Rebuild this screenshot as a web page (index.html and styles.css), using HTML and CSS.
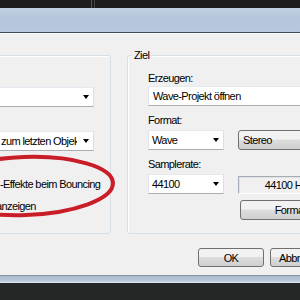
FILE: index.html
```html
<!DOCTYPE html>
<html lang="de">
<head>
  <meta charset="UTF-8">
  <title>Bouncing</title>
  <link rel="stylesheet" href="styles.css">
</head>
<body>
  <div class="screen">
    <div class="taskbar"><span class="taskbar-sep"></span></div>

    <div class="window">
      <div class="titlebar"></div>

      <div class="client">
        <div class="groups">
          <div class="group group-source">
            <div class="combo"><span class="combo-text"></span></div>
            <div class="combo combo-second"><span class="combo-text shift">zum letzten Objekt</span></div>
            <div class="check-line">-Effekte beim Bouncing</div>
            <div class="check-line check-line-last">anzeigen</div>
          </div>

          <div class="group group-target">
            <span class="group-title">Ziel</span>
            <div class="label">Erzeugen:</div>
            <div class="combo combo-wide"><span class="combo-text">Wave-Projekt öffnen</span></div>

            <div class="label label-gap">Format:</div>
            <div class="field-row">
              <div class="combo combo-small"><span class="combo-text">Wave</span></div>
              <div class="combo-button">Stereo</div>
            </div>

            <div class="label label-gap">Samplerate:</div>
            <div class="field-row">
              <div class="combo combo-small"><span class="combo-text">44100</span></div>
              <div class="readonly">44100 Hz</div>
            </div>
            <button class="btn btn-format">Format...</button>
          </div>
        </div>

        <div class="actions">
          <button class="btn">OK</button>
          <button class="btn">Abbrechen</button>
        </div>
      </div>

      <div class="frame-bottom"></div>
    </div>

    <svg class="mark" width="300" height="300" viewBox="0 0 300 300">
      <ellipse cx="25" cy="186" rx="88" ry="29" fill="none" stroke="#c91d27" stroke-width="4" transform="rotate(-2 25 186)"/>
    </svg>
  </div>
</body>
</html>
```

FILE: styles.css
```css
body {
  margin: 0;
  background-color: #232826;
  font-family: "Liberation Sans", Arial, sans-serif;
  font-size: 11px;
  letter-spacing: -0.6px;
  color: #000;
}

.screen {
  position: relative;
  width: 300px;
  height: 300px;
  overflow: hidden;
}

.taskbar {
  height: 8px;
  background-color: #1d1d1d;
}

.taskbar-sep {
  display: block;
  margin-left: 91px;
  width: 2px;
  height: 8px;
  border-left: 1px solid #555;
  border-right: 1px solid #444;
}

.titlebar {
  height: 24px;
  background: linear-gradient(#c2d0e3, #b5c5dc 40%, #b9c8de);
  border-bottom: 1px solid #3e4b5c;
}

.client {
  box-sizing: border-box;
  height: 242px;
  padding-top: 21px;
  background-color: #f0f0f0;
  border-top: 1px solid #fbfbfb;
}

.groups {
  display: flex;
  gap: 16px;
}

.group {
  position: relative;
  box-sizing: border-box;
  height: 179px;
  border: 1px solid #d5dfe5;
  box-shadow: inset 1px 1px 0 #fff;
  border-radius: 3px;
}

.group-source {
  margin-left: -40px;
  width: 151px;
  padding: 31px 16px 0 10px;
  flex-shrink: 0;
}

.group-target {
  width: 220px;
  flex-shrink: 0;
  padding: 15px 0 0 20px;
}

.group-title {
  position: absolute;
  top: -8px;
  left: 4px;
  padding: 0 2px;
  background-color: #f0f0f0;
  line-height: 14px;
}

.label {
  line-height: 14px;
}

.label-gap {
  margin-top: 7px;
}

.combo {
  position: relative;
  box-sizing: border-box;
  height: 20px;
  background-color: #fff;
  border: 1px solid #abadb3;
  border-top-color: #e3e9ef;
  border-left-color: #e2e3ea;
  border-right-color: #dbdfe6;
  padding: 0 16px 0 3px;
  line-height: 18px;
  white-space: nowrap;
  overflow: hidden;
}

.combo::after {
  content: "";
  position: absolute;
  right: 4px;
  top: 7px;
  border-top: 4px solid #000;
  border-left: 3.5px solid transparent;
  border-right: 3.5px solid transparent;
}

.combo-wide {
  width: 200px;
  margin-top: 1px;
  padding-left: 4px;
}

.combo-wide::after {
  display: none;
}

.combo-second {
  margin-top: 24px;
}

.combo-text {
  display: block;
  overflow: hidden;
}

.combo-text.shift {
  padding-left: 26px;
}

.check-line {
  padding-left: 29px;
  margin-top: 26px;
  line-height: 14px;
  white-space: nowrap;
}

.check-line-last {
  padding-left: 25px;
  margin-top: 8px;
}

.field-row {
  display: flex;
  gap: 14px;
  margin-top: 3px;
  align-items: flex-start;
}

.combo-small {
  width: 76px;
  flex-shrink: 0;
}

.combo-button {
  box-sizing: border-box;
  width: 90px;
  height: 20px;
  padding-left: 4px;
  line-height: 18px;
  border: 1px solid #707070;
  border-radius: 3px;
  background: linear-gradient(#f2f2f2 45%, #dddddd 50%, #cfcfcf);
}

.readonly {
  box-sizing: border-box;
  width: 74px;
  height: 18px;
  margin-top: 2px;
  padding-right: 4px;
  text-align: right;
  line-height: 16px;
  background-color: #f0f0f0;
  border: 1px solid #a5acb5;
  border-right-color: #fff;
  border-bottom-color: #fff;
  box-shadow: inset 1px 1px 0 #e3e3e3;
  white-space: nowrap;
}

.btn {
  box-sizing: border-box;
  height: 20px;
  width: 66px;
  padding: 0;
  font-family: inherit;
  font-size: 11px;
  letter-spacing: inherit;
  color: #000;
  border: 1px solid #707070;
  border-radius: 3px;
  background: linear-gradient(#f2f2f2 45%, #dddddd 50%, #cfcfcf);
}

.btn-format {
  display: block;
  width: 108px;
  margin: 6px 0 0 92px;
}

.actions {
  display: flex;
  gap: 6px;
  margin: 14px 0 0 198px;
}

.actions .btn {
  flex-shrink: 0;
  height: 19px;
}

.frame-bottom {
  box-sizing: border-box;
  height: 8px;
  border-top: 1px solid #8a949f;
  background: linear-gradient(#a9b8cc, #bac8db 70%, #e4ebf3);
}

.mark {
  position: absolute;
  left: 0;
  top: 0;
  pointer-events: none;
}
```
